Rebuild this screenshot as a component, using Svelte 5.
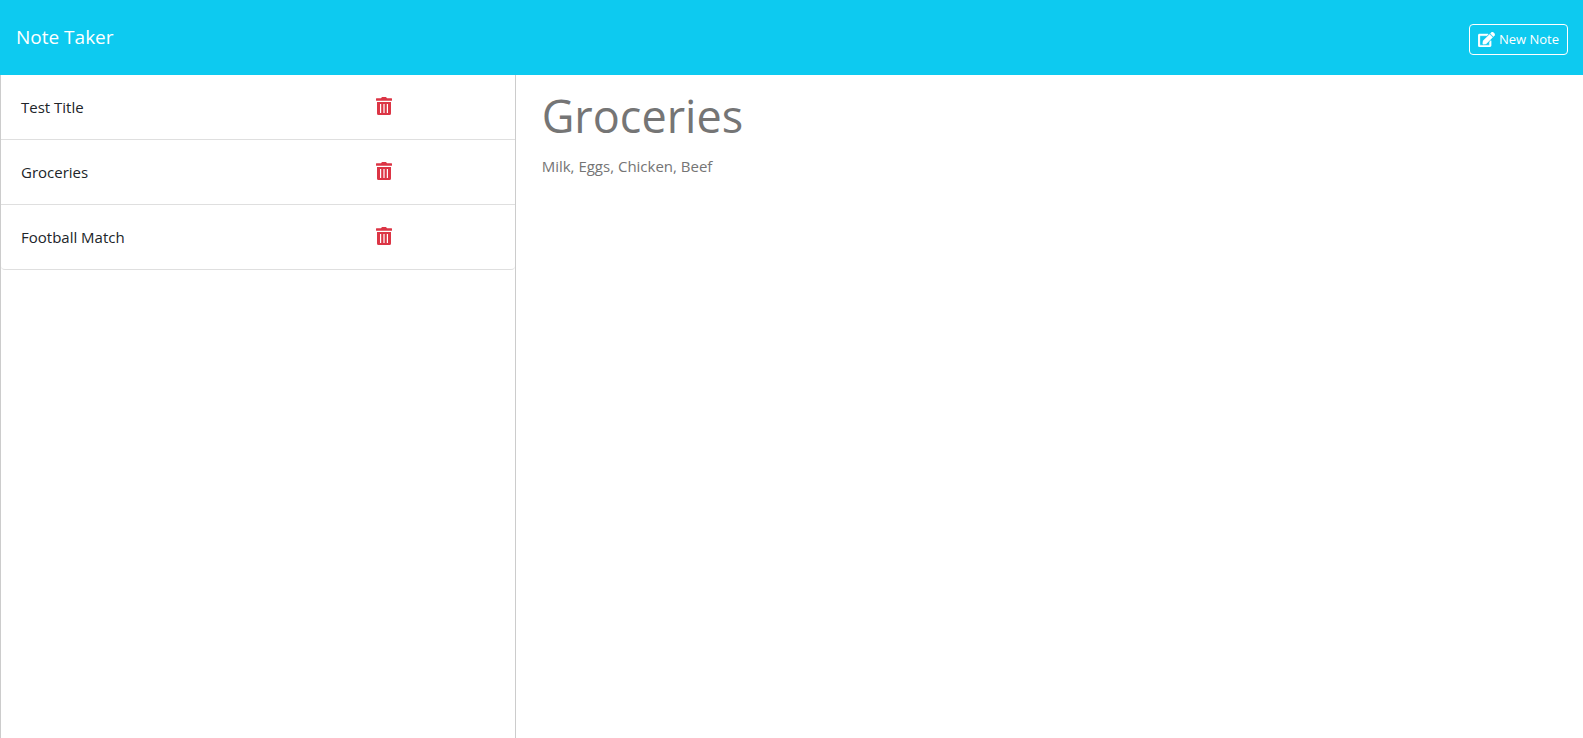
<script>
  let notes = $state([
    { id: 1, title: 'Test Title', text: '' },
    { id: 2, title: 'Groceries', text: 'Milk, Eggs, Chicken, Beef' },
    { id: 3, title: 'Football Match', text: '' }
  ]);
  let title = $state('Groceries');
  let text = $state('Milk, Eggs, Chicken, Beef');

  function show(note) {
    title = note.title;
    text = note.text;
  }
  function clear() {
    title = '';
    text = '';
  }
  function remove(id) {
    notes = notes.filter((n) => n.id !== id);
  }
</script>

<div class="page">
  <header>
    <a class="brand" href="#home">Note Taker</a>
    <button class="new" onclick={clear}>
      <svg width="17" height="15" viewBox="0 0 576 512" aria-hidden="true">
        <path fill="currentColor" stroke="currentColor" stroke-width="12" d="M402.600 83.200l90.200 90.200c3.800 3.800 3.800 10 0 13.800L274.400 405.600l-92.800 10.300c-12.400 1.400-22.900-9.100-21.500-21.500l10.300-92.800L388.800 83.200c3.800-3.800 10-3.800 13.800 0zm162-22.900l-48.800-48.800c-15.200-15.200-39.900-15.200-55.200 0l-35.400 35.400c-3.800 3.800-3.800 10 0 13.800l90.200 90.200c3.800 3.800 10 3.800 13.800 0l35.400-35.400c15.200-15.300 15.200-40 0-55.200zM384 346.200V448H64V128h229.800c3.200 0 6.200-1.300 8.500-3.500l40-40c7.600-7.600 2.200-20.500-8.500-20.500H48C21.500 64 0 85.500 0 112v352c0 26.500 21.500 48 48 48h352c26.500 0 48-21.500 48-48V306.200c0-10.700-12.900-16-20.500-8.500l-40 40c-2.200 2.300-3.500 5.300-3.500 8.500z" />
      </svg>
      <span>New Note</span>
    </button>
  </header>
  <main>
    <aside>
      <ul>
        {#each notes as note (note.id)}
          <li>
            <button class="title" onclick={() => show(note)}>{note.title}</button>
            <button class="delete" aria-label="Delete {note.title}" onclick={() => remove(note.id)}>
              <svg width="16" height="18" viewBox="0 0 16 18" aria-hidden="true">
                <path fill="currentColor" fill-rule="evenodd" d="M.5 1.200H5L6 0h4l1 1.200h4.500a.5.500 0 0 1 .5.500v1.600a.5.500 0 0 1-.5.500H.5a.5.500 0 0 1-.5-.5V1.700a.5.500 0 0 1 .5-.5zM1 5h14v11.500a1.500 1.500 0 0 1-1.500 1.500h-11A1.500 1.500 0 0 1 1 16.500zM4 7v9h1.200V7zM7.400 7v9h1.200V7zM10.800 7v9H12V7z" />
              </svg>
            </button>
          </li>
        {/each}
      </ul>
    </aside>
    <section>
      <input aria-label="Note title" bind:value={title} />
      <textarea aria-label="Note text" bind:value={text}></textarea>
    </section>
  </main>
</div>

<style>
  :global(body) {
    margin: 0;
  }
  .page {
    display: flex;
    flex-direction: column;
    min-height: 100vh;
    background: #fff;
    color: #212529;
    font-family: "Segoe UI", "Open Sans", "Noto Sans", sans-serif;
    font-size: 15px;
    line-height: 24px;
  }
  *,
  *::before {
    box-sizing: border-box;
  }
  button,
  input,
  textarea {
    margin: 0;
    padding: 0;
    border: 0;
    background: none;
    color: inherit;
    font: inherit;
  }
  button {
    cursor: pointer;
  }
  header {
    display: flex;
    align-items: flex-start;
    justify-content: space-between;
    padding: 24px 15px 20px 16px;
    background: #0dcaf0;
    color: #fff;
  }
  .brand {
    color: inherit;
    font-size: 19px;
    line-height: 27px;
    text-decoration: none;
  }
  .new {
    display: flex;
    align-items: center;
    gap: 4px;
    padding: 4px 8px;
    border: 1px solid #fff;
    border-radius: 4px;
    font-size: 13px;
    line-height: 21px;
  }
  main {
    display: grid;
    grid-template-columns: 1fr 2fr;
    flex: 1;
  }
  aside {
    margin-right: 12px;
    border: solid #ccc;
    border-width: 0 1px;
  }
  ul {
    margin: 0;
    padding: 0;
    border-bottom: 1px solid #dfdfdf;
    border-radius: 0 0 4px 4px;
    list-style: none;
  }
  li {
    display: grid;
    grid-template-columns: 3fr 1fr;
    align-items: center;
    height: 64px;
    padding: 0 20px;
  }
  li + li {
    height: 65px;
    border-top: 1px solid #dfdfdf;
  }
  .title {
    text-align: left;
  }
  .delete {
    display: flex;
    justify-self: start;
    padding-bottom: 2px;
    color: #dc3545;
  }
  section {
    display: flex;
    flex-direction: column;
    gap: 8px;
    padding: 11px 14px;
    color: #757575;
  }
  input {
    width: 100%;
    height: 60px;
    font-size: 45px;
    line-height: 60px;
  }
  textarea {
    flex: 1;
    width: 100%;
    resize: none;
  }
  input,
  textarea {
    outline: 0;
  }
</style>
